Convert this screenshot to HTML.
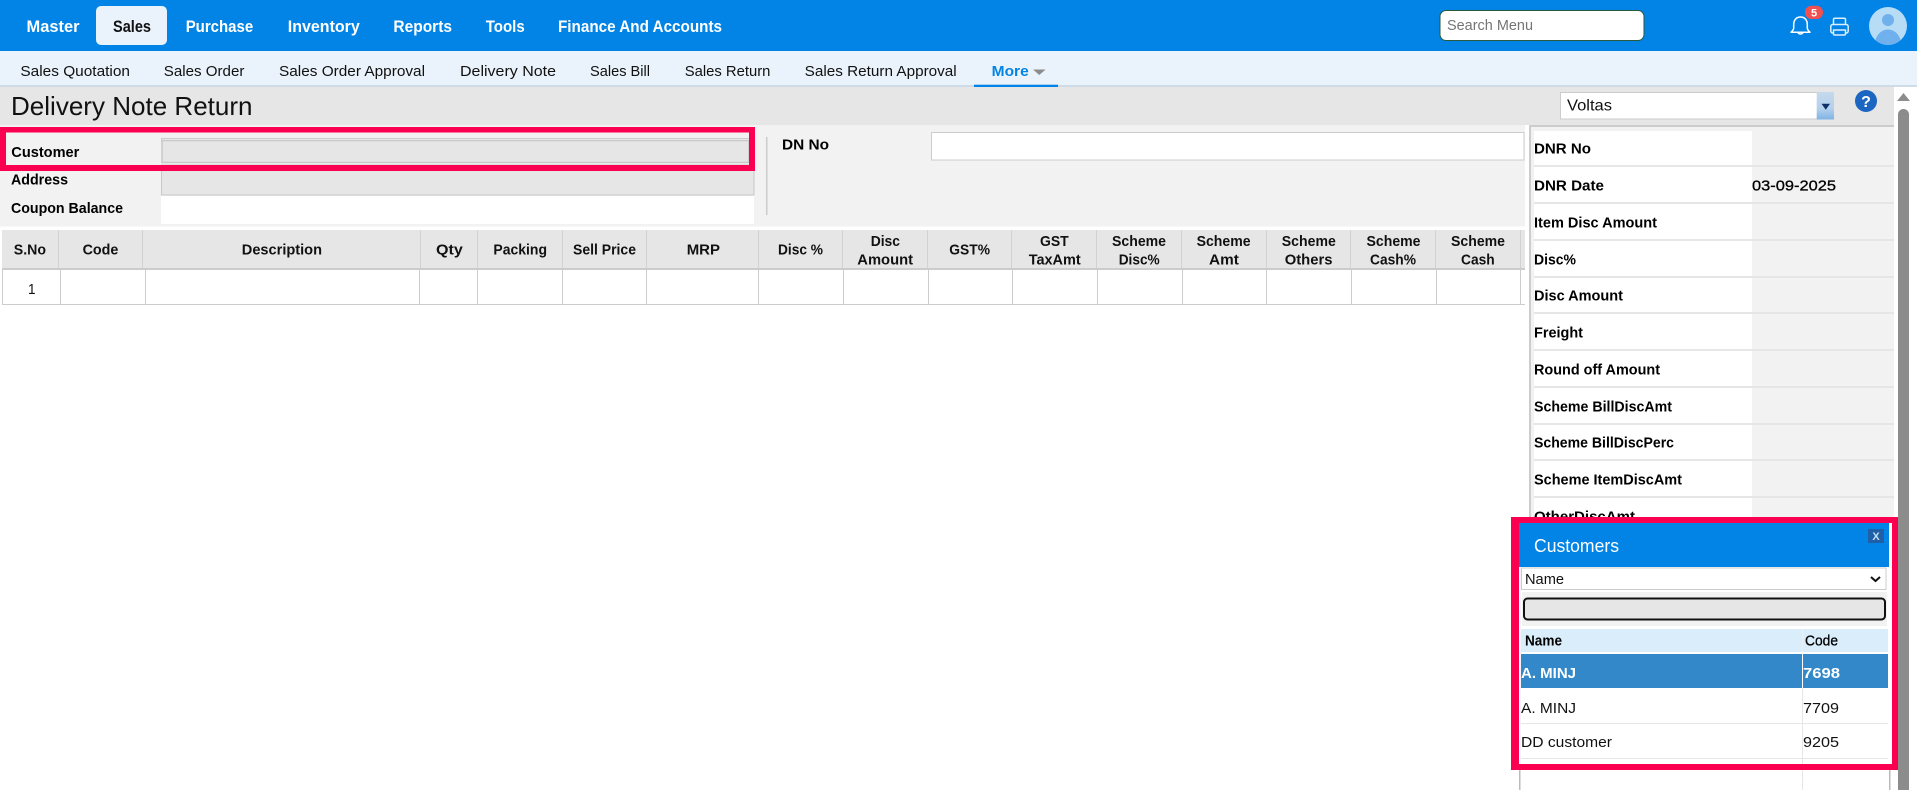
<!DOCTYPE html>
<html lang="en">
<head>
<meta charset="utf-8">
<title>Delivery Note Return</title>
<style>
html,body{margin:0;padding:0;background:#fff;width:1917px;height:790px;overflow:hidden}
svg{display:block}
text{font-family:"Liberation Sans",sans-serif;white-space:pre}
.nav{font-size:16.5px;fill:#fff;font-weight:bold}
.sub{font-size:15px;fill:#111}
.lb{font-size:15px;fill:#000;font-weight:bold;transform:translateY(-.5px)}
.th{font-size:15px;fill:#111;font-weight:bold;transform:translateY(-.5px)}
.td{font-size:15px;fill:#111}
</style>
</head>
<body>
<svg width="1917" height="790" viewBox="0 0 1917 790" xmlns="http://www.w3.org/2000/svg">
<rect width="1917" height="790" fill="#fff"/>

<!-- top bar -->
<rect width="1917" height="51" fill="#0284e6"/>
<rect x="96" y="6" width="71" height="39" rx="5" fill="#eaf3fb"/>
<text class="nav" x="26.5" y="32" textLength="53" lengthAdjust="spacingAndGlyphs">Master</text>
<text class="nav" x="113" y="32" textLength="38" lengthAdjust="spacingAndGlyphs" style="fill:#111">Sales</text>
<text class="nav" x="185.7" y="32" textLength="67.5" lengthAdjust="spacingAndGlyphs">Purchase</text>
<text class="nav" x="287.8" y="32" textLength="72" lengthAdjust="spacingAndGlyphs">Inventory</text>
<text class="nav" x="393.4" y="32" textLength="58.6" lengthAdjust="spacingAndGlyphs">Reports</text>
<text class="nav" x="485.7" y="32" textLength="39" lengthAdjust="spacingAndGlyphs">Tools</text>
<text class="nav" x="558" y="32" textLength="164" lengthAdjust="spacingAndGlyphs">Finance And Accounts</text>

<rect x="1440" y="10.500" width="204" height="30" rx="6" fill="#fff" stroke="#2b5a3b"/>
<text x="1447" y="30" font-size="15" fill="#757575" textLength="86" lengthAdjust="spacingAndGlyphs">Search Menu</text>

<!-- bell -->
<path d="M1800.5 17c-4.5 0-6.800 3.400-6.800 7.500v3.500c0 2-1.500 3-2.700 4.200h19c-1.200-1.200-2.700-2.200-2.700-4.200v-3.500c0-4.100-2.300-7.500-6.800-7.500z" fill="none" stroke="#fff" stroke-width="1.500" stroke-linejoin="round"/>
<path d="M1798 32.500a2.700 2.500 0 0 0 5 0" fill="none" stroke="#fff" stroke-width="1.500"/>
<rect x="1805" y="5.700" width="18" height="13.300" rx="6.600" fill="#f0504f"/>
<text x="1814" y="16.500" font-size="11" font-weight="bold" fill="#fff" text-anchor="middle">5</text>
<!-- printer -->
<g fill="none" stroke="#dcefff" stroke-width="1.500" stroke-linejoin="round">
<path d="M1833.500 24.500v-5a1.200 1.200 0 0 1 1.200-1.200h9.600a1.200 1.200 0 0 1 1.200 1.200v5"/>
<rect x="1830.800" y="24.500" width="17.400" height="8.500" rx="2"/>
<path d="M1833.500 30h12v3.800a1.200 1.200 0 0 1-1.200 1.200h-9.600a1.200 1.200 0 0 1-1.200-1.200z" fill="#0284e6"/>
</g>
<!-- avatar -->
<clipPath id="av"><circle cx="1888" cy="26" r="19"/></clipPath>
<circle cx="1888" cy="26" r="19" fill="#b6dcf6"/>
<g clip-path="url(#av)" fill="#70b0ec">
<circle cx="1888" cy="20" r="6"/>
<ellipse cx="1888" cy="44" rx="13" ry="14.500"/>
</g>

<!-- sub nav -->
<rect y="51" width="1917" height="34" fill="#eaf3fb"/>
<rect y="85" width="1917" height="2" fill="#cfdce8"/>
<text class="sub" x="20.400" y="76" textLength="109.600" lengthAdjust="spacingAndGlyphs">Sales Quotation</text>
<text class="sub" x="163.800" y="76" textLength="80.600" lengthAdjust="spacingAndGlyphs">Sales Order</text>
<text class="sub" x="279" y="76" textLength="146" lengthAdjust="spacingAndGlyphs">Sales Order Approval</text>
<text class="sub" x="460" y="76" textLength="96" lengthAdjust="spacingAndGlyphs">Delivery Note</text>
<text class="sub" x="590" y="76" textLength="60" lengthAdjust="spacingAndGlyphs">Sales Bill</text>
<text class="sub" x="684.700" y="76" textLength="85.700" lengthAdjust="spacingAndGlyphs">Sales Return</text>
<text class="sub" x="804.700" y="76" textLength="152" lengthAdjust="spacingAndGlyphs">Sales Return Approval</text>
<text class="sub" x="991.700" y="76" textLength="37" lengthAdjust="spacingAndGlyphs" style="fill:#0284e6;font-weight:bold">More</text>
<path d="M1033 69.500h12.600l-6.300 5.500z" fill="#8c8c8c"/>
<rect x="974" y="84.700" width="84" height="2.600" fill="#0284e6"/>

<!-- title bar -->
<rect y="87" width="1894" height="38" fill="#e6e6e6"/>
<text x="11" y="115" font-size="26" fill="#111" textLength="241.500" lengthAdjust="spacingAndGlyphs">Delivery Note Return</text>
<rect x="1560.500" y="92.500" width="273" height="26.500" fill="#fff" stroke="#ccc"/>
<text x="1567" y="110.500" font-size="16" fill="#111" textLength="45" lengthAdjust="spacingAndGlyphs">Voltas</text>
<linearGradient id="dd" x1="0" y1="0" x2="0" y2="1"><stop offset="0" stop-color="#c6d9ec"/><stop offset=".6" stop-color="#b4d0ec"/><stop offset="1" stop-color="#7fb3e5"/></linearGradient>
<rect x="1816.700" y="92" width="17.300" height="27.500" fill="url(#dd)"/>
<path d="M1821.500 103.700h8.500l-4.250 6z" fill="#10306a"/>
<circle cx="1866" cy="101" r="11" fill="#1b66c0"/>
<text x="1866" y="107" font-size="16" font-weight="bold" fill="#fff" text-anchor="middle">?</text>

<!-- scrollbar -->
<path d="M1897 101l6.500-8 6.500 8z" fill="#8c8c8c"/>
<path d="M1898 114.500a5.500 5.500 0 0 1 11 0V790h-11z" fill="#8c8c8c"/>

<!-- form -->
<rect y="125" width="1525" height="101.500" fill="#f2f2f2"/>
<rect x="161.500" y="138.500" width="588" height="2" fill="none" stroke="#ccc"/>
<rect x="162" y="140.500" width="587" height="22" fill="#e6e6e6" stroke="#c8c8c8" stroke-width="1.500"/>
<rect x="161.500" y="165" width="592.500" height="30" fill="#e6e6e6" stroke="#c8c8c8"/>
<rect x="161" y="196" width="593" height="28" fill="#fff"/>
<text class="lb" x="11.300" y="157.500" textLength="68" lengthAdjust="spacingAndGlyphs">Customer</text>
<text class="lb" x="11" y="185" textLength="57" lengthAdjust="spacingAndGlyphs">Address</text>
<text class="lb" x="11" y="213.700" textLength="112" lengthAdjust="spacingAndGlyphs">Coupon Balance</text>
<path fill-rule="evenodd" d="M0 127H755V171H0zM6 132.500V165H749V132.500z" fill="#fb0050"/>
<rect x="766" y="137" width="1.500" height="78" fill="#ccc"/>
<text class="lb" x="782" y="150" textLength="47" lengthAdjust="spacingAndGlyphs">DN No</text>
<rect x="931.500" y="132.500" width="592.500" height="27.500" fill="#fff" stroke="#ccc"/>

<!-- grid -->
<rect x="2" y="230" width="1523" height="38" fill="#e6e6e6"/>
<rect x="2" y="268" width="1523" height="2" fill="#ccc"/>
<rect x="2" y="304" width="1523" height="1" fill="#ccc"/>
<g fill="#d2d2d2">
<rect x="58" y="230" width="1" height="38"/><rect x="142" y="230" width="1" height="38"/><rect x="420" y="230" width="1" height="38"/><rect x="477" y="230" width="1" height="38"/><rect x="562" y="230" width="1" height="38"/><rect x="646" y="230" width="1" height="38"/><rect x="758" y="230" width="1" height="38"/><rect x="842" y="230" width="1" height="38"/><rect x="927" y="230" width="1" height="38"/><rect x="1011" y="230" width="1" height="38"/><rect x="1096" y="230" width="1" height="38"/><rect x="1181" y="230" width="1" height="38"/><rect x="1266" y="230" width="1" height="38"/><rect x="1350" y="230" width="1" height="38"/><rect x="1435" y="230" width="1" height="38"/><rect x="1520" y="230" width="1" height="38"/>
</g>
<g fill="#ccc">
<rect x="2" y="270" width="1" height="34"/><rect x="60" y="270" width="1" height="34"/><rect x="145" y="270" width="1" height="34"/><rect x="419" y="270" width="1" height="34"/><rect x="477" y="270" width="1" height="34"/><rect x="562" y="270" width="1" height="34"/><rect x="646" y="270" width="1" height="34"/><rect x="758" y="270" width="1" height="34"/><rect x="843" y="270" width="1" height="34"/><rect x="928" y="270" width="1" height="34"/><rect x="1012" y="270" width="1" height="34"/><rect x="1097" y="270" width="1" height="34"/><rect x="1182" y="270" width="1" height="34"/><rect x="1266" y="270" width="1" height="34"/><rect x="1351" y="270" width="1" height="34"/><rect x="1436" y="270" width="1" height="34"/><rect x="1520" y="270" width="1" height="34"/>
</g>
<text class="th" x="13.800" y="255" textLength="32.200" lengthAdjust="spacingAndGlyphs">S.No</text>
<text class="th" x="82.600" y="255" textLength="35.800" lengthAdjust="spacingAndGlyphs">Code</text>
<text class="th" x="241.800" y="255" textLength="80.200" lengthAdjust="spacingAndGlyphs">Description</text>
<text class="th" x="436" y="255" textLength="26.800" lengthAdjust="spacingAndGlyphs">Qty</text>
<text class="th" x="493.400" y="255" textLength="53.600" lengthAdjust="spacingAndGlyphs">Packing</text>
<text class="th" x="573" y="255" textLength="63" lengthAdjust="spacingAndGlyphs">Sell Price</text>
<text class="th" x="686.700" y="255" textLength="33.300" lengthAdjust="spacingAndGlyphs">MRP</text>
<text class="th" x="778" y="255" textLength="45" lengthAdjust="spacingAndGlyphs">Disc %</text>
<text class="th" x="870.700" y="246.300" textLength="29.300" lengthAdjust="spacingAndGlyphs">Disc</text>
<text class="th" x="857.300" y="265" textLength="55.700" lengthAdjust="spacingAndGlyphs">Amount</text>
<text class="th" x="949.300" y="255" textLength="40.700" lengthAdjust="spacingAndGlyphs">GST%</text>
<text class="th" x="1040" y="246.300" textLength="28.700" lengthAdjust="spacingAndGlyphs">GST</text>
<text class="th" x="1028.700" y="265" textLength="52" lengthAdjust="spacingAndGlyphs">TaxAmt</text>
<text class="th" x="1112" y="246.300" textLength="54" lengthAdjust="spacingAndGlyphs">Scheme</text>
<text class="th" x="1118.700" y="265" textLength="41" lengthAdjust="spacingAndGlyphs">Disc%</text>
<text class="th" x="1196.600" y="246.300" textLength="54" lengthAdjust="spacingAndGlyphs">Scheme</text>
<text class="th" x="1209" y="265" textLength="29.800" lengthAdjust="spacingAndGlyphs">Amt</text>
<text class="th" x="1281.800" y="246.300" textLength="54" lengthAdjust="spacingAndGlyphs">Scheme</text>
<text class="th" x="1284.700" y="265" textLength="47.800" lengthAdjust="spacingAndGlyphs">Others</text>
<text class="th" x="1366.500" y="246.300" textLength="54" lengthAdjust="spacingAndGlyphs">Scheme</text>
<text class="th" x="1370" y="265" textLength="46" lengthAdjust="spacingAndGlyphs">Cash%</text>
<text class="th" x="1451" y="246.300" textLength="54" lengthAdjust="spacingAndGlyphs">Scheme</text>
<text class="th" x="1461" y="265" textLength="33.700" lengthAdjust="spacingAndGlyphs">Cash</text>
<text class="td" x="28" y="294" textLength="7.500" lengthAdjust="spacingAndGlyphs">1</text>

<!-- right panel -->
<rect x="1529" y="125" width="365" height="2" fill="#ccc"/>
<rect x="1529" y="125" width="2" height="400" fill="#ccc"/>
<rect x="1531" y="127" width="363" height="400" fill="#f2f2f2"/>
<g fill="#fff">
<rect x="1534" y="131" width="218" height="34"/><rect x="1534" y="167" width="218" height="35"/><rect x="1534" y="204" width="218" height="35"/><rect x="1534" y="241" width="218" height="35"/><rect x="1534" y="278" width="218" height="34"/><rect x="1534" y="314" width="218" height="35"/><rect x="1534" y="351" width="218" height="35"/><rect x="1534" y="388" width="218" height="35"/><rect x="1534" y="425" width="218" height="34"/><rect x="1534" y="461" width="218" height="35"/><rect x="1534" y="498" width="218" height="30"/>
</g>
<g fill="#e6e6e6">
<rect x="1534" y="165" width="360" height="2"/><rect x="1534" y="202" width="360" height="2"/><rect x="1534" y="239" width="360" height="2"/><rect x="1534" y="276" width="360" height="2"/><rect x="1534" y="312" width="360" height="2"/><rect x="1534" y="349" width="360" height="2"/><rect x="1534" y="386" width="360" height="2"/><rect x="1534" y="423" width="360" height="2"/><rect x="1534" y="459" width="360" height="2"/><rect x="1534" y="496" width="360" height="2"/>
</g>
<text class="lb" x="1534" y="154" textLength="57" lengthAdjust="spacingAndGlyphs">DNR No</text>
<text class="lb" x="1534" y="191" textLength="70" lengthAdjust="spacingAndGlyphs">DNR Date</text>
<text class="lb" x="1534" y="228" textLength="123" lengthAdjust="spacingAndGlyphs">Item Disc Amount</text>
<text class="lb" x="1534" y="265" textLength="42" lengthAdjust="spacingAndGlyphs">Disc%</text>
<text class="lb" x="1534" y="301" textLength="89" lengthAdjust="spacingAndGlyphs">Disc Amount</text>
<text class="lb" x="1534" y="338" textLength="49" lengthAdjust="spacingAndGlyphs">Freight</text>
<text class="lb" x="1534" y="375" textLength="126" lengthAdjust="spacingAndGlyphs">Round off Amount</text>
<text class="lb" x="1534" y="412" textLength="138" lengthAdjust="spacingAndGlyphs">Scheme BillDiscAmt</text>
<text class="lb" x="1534" y="448" textLength="140" lengthAdjust="spacingAndGlyphs">Scheme BillDiscPerc</text>
<text class="lb" x="1534" y="485" textLength="148" lengthAdjust="spacingAndGlyphs">Scheme ItemDiscAmt</text>
<text class="lb" x="1534" y="522" textLength="101" lengthAdjust="spacingAndGlyphs">OtherDiscAmt</text>
<text x="1752" y="190.500" font-size="15" fill="#000" stroke="#000" stroke-width=".3" textLength="84" lengthAdjust="spacingAndGlyphs">03-09-2025</text>

<!-- customers popup -->
<rect x="1519" y="523" width="373" height="267" fill="#fff"/>
<rect x="1519" y="764" width="1.500" height="26" fill="#bbb"/>
<rect x="1889" y="764" width="1.500" height="26" fill="#bbb"/>
<rect x="1519" y="523" width="370" height="44" fill="#0284e6"/>
<text x="1534" y="552" font-size="18" fill="#fff" textLength="85" lengthAdjust="spacingAndGlyphs">Customers</text>
<rect x="1868" y="529" width="16" height="14" fill="#1f5fa8"/>
<text x="1876" y="540" font-size="11" font-weight="bold" fill="#c9dff5" text-anchor="middle">X</text>
<rect x="1521.500" y="568" width="364.500" height="21.500" fill="#fff" stroke="#ccc"/>
<text x="1525" y="584" font-size="15" fill="#111" textLength="39" lengthAdjust="spacingAndGlyphs">Name</text>
<path d="M1871 577l4.500 4 4.500-4" fill="none" stroke="#111" stroke-width="2"/>
<rect x="1522" y="592" width="365" height="34" fill="#f2f2f2"/>
<rect x="1524" y="598.500" width="361" height="21" rx="3.500" fill="#e6e6e6" stroke="#111" stroke-width="2"/>
<rect x="1521" y="629" width="367" height="23" fill="#d9edfb"/>
<rect x="1802" y="629" width="1" height="23" fill="#e8f1f8"/>
<text class="lb" x="1525" y="646" textLength="37" lengthAdjust="spacingAndGlyphs">Name</text>
<text x="1805" y="645.500" font-size="15" fill="#000" stroke="#000" stroke-width=".3" textLength="33" lengthAdjust="spacingAndGlyphs">Code</text>
<rect x="1521" y="654" width="367" height="34" fill="#3288c8"/>
<rect x="1802" y="654" width="1" height="136" fill="#e6e6e6"/>
<rect x="1802" y="654" width="1" height="34" fill="#fff"/>
<text x="1521" y="678" font-size="15" font-weight="bold" fill="#fff" textLength="55" lengthAdjust="spacingAndGlyphs">A. MINJ</text>
<text x="1803" y="678" font-size="15" font-weight="bold" fill="#fff" textLength="37" lengthAdjust="spacingAndGlyphs">7698</text>
<text class="td" x="1521" y="713" textLength="55" lengthAdjust="spacingAndGlyphs">A. MINJ</text>
<text class="td" x="1803" y="713" textLength="36" lengthAdjust="spacingAndGlyphs">7709</text>
<rect x="1521" y="723" width="367" height="1" fill="#e6e6e6"/>
<text class="td" x="1521" y="747" textLength="91" lengthAdjust="spacingAndGlyphs">DD customer</text>
<text class="td" x="1803" y="747" textLength="36" lengthAdjust="spacingAndGlyphs">9205</text>
<rect x="1521" y="758" width="367" height="1" fill="#e6e6e6"/>
<path fill-rule="evenodd" d="M1511 517H1898V770H1511zM1519 523V764H1892V523z" fill="#fb0050"/>
</svg>
</body>
</html>
